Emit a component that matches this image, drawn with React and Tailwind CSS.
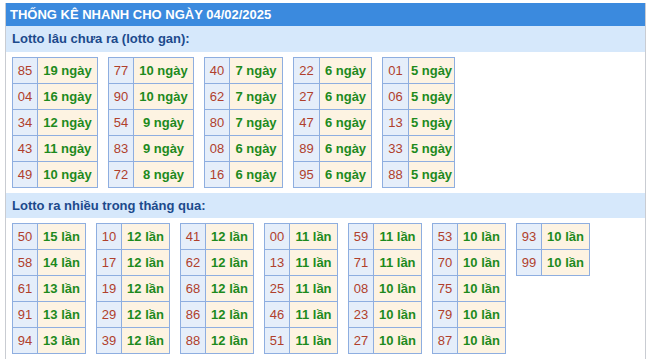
const GAN = [
  { w: ['w-[25px]', 'w-[60px]'], rows: [['85', '19 ngày'], ['04', '16 ngày'], ['34', '12 ngày'], ['43', '11 ngày'], ['49', '10 ngày']] },
  { w: ['w-[25px]', 'w-[60px]'], rows: [['77', '10 ngày'], ['90', '10 ngày'], ['54', '9 ngày'], ['83', '9 ngày'], ['72', '8 ngày']] },
  { w: ['w-[25px]', 'w-[53px]'], rows: [['40', '7 ngày'], ['62', '7 ngày'], ['80', '7 ngày'], ['08', '6 ngày'], ['16', '6 ngày']] },
  { w: ['w-[26px]', 'w-[52px]'], rows: [['22', '6 ngày'], ['27', '6 ngày'], ['47', '6 ngày'], ['89', '6 ngày'], ['95', '6 ngày']] },
  { w: ['w-[26px]', 'w-[46px]'], rows: [['01', '5 ngày'], ['06', '5 ngày'], ['13', '5 ngày'], ['33', '5 ngày'], ['88', '5 ngày']] },
]

const NHIEU = [
  [['50', '15 lần'], ['58', '14 lần'], ['61', '13 lần'], ['91', '13 lần'], ['94', '13 lần']],
  [['10', '12 lần'], ['17', '12 lần'], ['19', '12 lần'], ['29', '12 lần'], ['39', '12 lần']],
  [['41', '12 lần'], ['62', '12 lần'], ['68', '12 lần'], ['86', '12 lần'], ['88', '12 lần']],
  [['00', '11 lần'], ['13', '11 lần'], ['25', '11 lần'], ['46', '11 lần'], ['51', '11 lần']],
  [['59', '11 lần'], ['71', '11 lần'], ['08', '10 lần'], ['23', '10 lần'], ['27', '10 lần']],
  [['53', '10 lần'], ['70', '10 lần'], ['75', '10 lần'], ['79', '10 lần'], ['87', '10 lần']],
  [['93', '10 lần'], ['99', '10 lần']],
]

function LotoTable({ rows, w }) {
  return (
    <div className="self-start border-l border-t border-[#8eaee0]">
      {rows.map(([num, val]) => (
        <div key={num} className="flex h-[26px]">
          <div className={`${w[0]} flex items-center justify-center border-b border-r border-[#8eaee0] bg-[#e5eefa] text-[#b0402c]`}>
            {num}
          </div>
          <div className={`${w[1]} flex items-center justify-center border-b border-r border-[#8eaee0] bg-[#fdf3e2] font-bold text-[#1d8a1d]`}>
            {val}
          </div>
        </div>
      ))}
    </div>
  )
}

export default function App() {
  return (
    <div className="h-[359px] bg-white pt-[3px] font-['Liberation_Sans',Arial,sans-serif] text-[13px]">
      <div className="ml-[5px] h-[356px] w-[641px] border-x border-[#c9ccd2]">
        <div className="flex h-[23px] items-center bg-[#3b8ade] pl-[4px] font-bold text-white">
          THỐNG KÊ NHANH CHO NGÀY 04/02/2025
        </div>
        <div className="flex h-[26px] items-center bg-[#d6e8fb] pl-[6px] font-bold text-[#1c4a8c]">
          Lotto lâu chưa ra (lotto gan):
        </div>
        <div className="flex gap-[10px] pl-[6px] pt-[5px]">
          {GAN.map((t, i) => (
            <LotoTable key={i} rows={t.rows} w={t.w} />
          ))}
        </div>
        <div className="mt-[5px] flex h-[25px] items-center bg-[#d6e8fb] pl-[6px] font-bold text-[#1c4a8c]">
          Lotto ra nhiều trong tháng qua:
        </div>
        <div className="flex gap-[10px] pl-[6px] pt-[5px]">
          {NHIEU.map((rows, i) => (
            <LotoTable key={i} rows={rows} w={['w-[25px]', 'w-[48px]']} />
          ))}
        </div>
      </div>
    </div>
  )
}
